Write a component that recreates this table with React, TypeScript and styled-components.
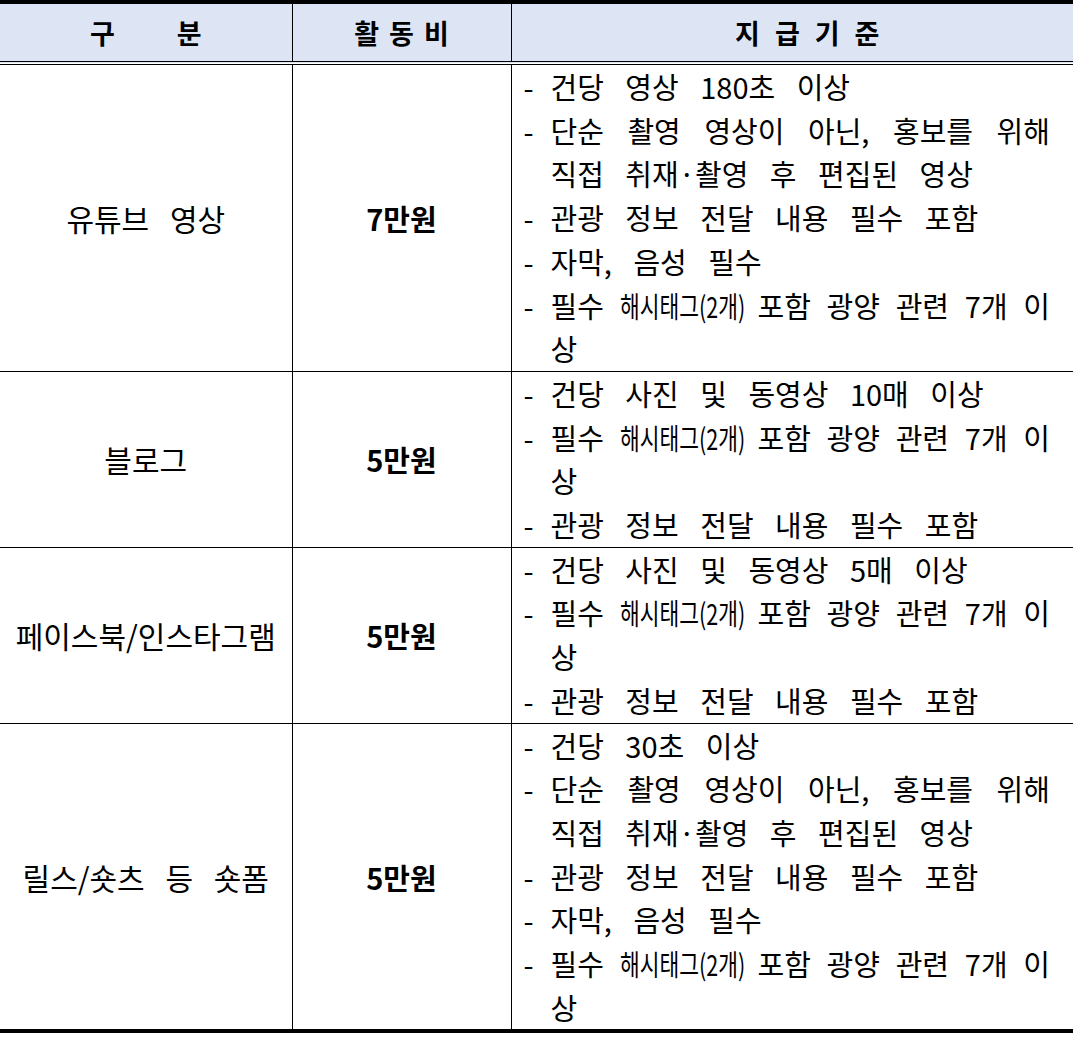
import React from 'react';
import styled, { createGlobalStyle } from 'styled-components';

type Rule = React.ReactNode[];

interface Row {
  kind: string;
  fee: string;
  rules: Rule[];
}

const GlobalStyle = createGlobalStyle`
  html, body {
    margin: 0;
    padding: 0;
    background: #fff;
  }
  body {
    font-family: "Noto Sans CJK KR", "Noto Sans", sans-serif;
    color: #000;
  }
`;

// the table runs a little past the right edge of the page, as in the scan
const Frame = styled.div`
  width: 1073px;
  overflow: hidden;
`;

const Table = styled.table`
  width: 1103px;
  border-collapse: collapse;
  table-layout: fixed;
  border-top: 4px solid #000;
  border-bottom: 4px solid #000;
`;

const Col = styled.col<{ $w: number }>`
  width: ${({ $w }) => $w}px;
`;

const HeadCell = styled.th`
  height: 57px;
  padding: 0;
  background: #dde5f5;
  border-left: 1px solid #000;
  border-bottom: 4px double #000;
  font-size: 27px;
  font-weight: 700;
  text-align: center;
  vertical-align: middle;
  &:first-child {
    border-left: none;
  }
`;

const HeadLabel = styled.span<{ $gap: number }>`
  letter-spacing: ${({ $gap }) => $gap}px;
  margin-right: -${({ $gap }) => $gap}px;
`;

const NameCell = styled.td<{ $bold?: boolean }>`
  padding: 0;
  border-left: 1px solid #000;
  border-top: 1px solid #000;
  text-align: center;
  vertical-align: middle;
  font-size: ${({ $bold }) => ($bold ? 29 : 30)}px;
  font-weight: ${({ $bold }) => ($bold ? 700 : 400)};
  word-spacing: 14px;
  &:first-child {
    border-left: none;
  }
`;

const RuleCell = styled.td`
  padding: 0 53px 0 12px;
  border-left: 1px solid #000;
  border-top: 1px solid #000;
  vertical-align: top;
  font-size: 29px;
  font-weight: 400;
  line-height: 43.7px;
`;

const Item = styled.div`
  display: flex;
`;

const Dash = styled.span`
  flex: none;
  width: 27px;
`;

const Lines = styled.div`
  flex: 1;
  min-width: 0;
`;

const Line = styled.div<{ $justify?: boolean }>`
  word-spacing: ${({ $justify }) => ($justify ? 0 : 15)}px;
  text-align: ${({ $justify }) => ($justify ? 'justify' : 'left')};
  text-align-last: ${({ $justify }) => ($justify ? 'justify' : 'auto')};
  white-space: ${({ $justify }) => ($justify ? 'normal' : 'nowrap')};
`;

const Narrow = styled.span`
  display: inline-block;
  transform: scaleX(0.74);
  transform-origin: left center;
  margin-right: -47px;
`;

const hashLine = (
  <>
    필수 <Narrow>해시태그(2개)</Narrow> 포함 광양 관련 7개 이
  </>
);

const rows: Row[] = [
  {
    kind: '유튜브 영상',
    fee: '7만원',
    rules: [
      ['건당 영상 180초 이상'],
      ['단순 촬영 영상이 아닌, 홍보를 위해', '직접 취재·촬영 후 편집된 영상'],
      ['관광 정보 전달 내용 필수 포함'],
      ['자막, 음성 필수'],
      [hashLine, '상'],
    ],
  },
  {
    kind: '블로그',
    fee: '5만원',
    rules: [
      ['건당 사진 및 동영상 10매 이상'],
      [hashLine, '상'],
      ['관광 정보 전달 내용 필수 포함'],
    ],
  },
  {
    kind: '페이스북/인스타그램',
    fee: '5만원',
    rules: [
      ['건당 사진 및 동영상 5매 이상'],
      [hashLine, '상'],
      ['관광 정보 전달 내용 필수 포함'],
    ],
  },
  {
    kind: '릴스/숏츠 등 숏폼',
    fee: '5만원',
    rules: [
      ['건당 30초 이상'],
      ['단순 촬영 영상이 아닌, 홍보를 위해', '직접 취재·촬영 후 편집된 영상'],
      ['관광 정보 전달 내용 필수 포함'],
      ['자막, 음성 필수'],
      [hashLine, '상'],
    ],
  },
];

const App = () => {
  return (
    <>
      <GlobalStyle />
      <Frame>
        <Table>
          <colgroup>
            <Col $w={292} />
            <Col $w={219} />
            <Col $w={592} />
          </colgroup>
          <thead>
            <tr>
              <HeadCell>
                <HeadLabel $gap={62}>구분</HeadLabel>
              </HeadCell>
              <HeadCell>
                <HeadLabel $gap={10}>활동비</HeadLabel>
              </HeadCell>
              <HeadCell>
                <HeadLabel $gap={15}>지급기준</HeadLabel>
              </HeadCell>
            </tr>
          </thead>
          <tbody>
            {rows.map(row => (
              <tr key={row.kind}>
                <NameCell>{row.kind}</NameCell>
                <NameCell $bold>{row.fee}</NameCell>
                <RuleCell>
                  {row.rules.map((rule, i) => (
                    <Item key={i}>
                      <Dash>-</Dash>
                      <Lines>
                        {rule.map((line, j) => (
                          <Line key={j} $justify={j < rule.length - 1}>
                            {line}
                          </Line>
                        ))}
                      </Lines>
                    </Item>
                  ))}
                </RuleCell>
              </tr>
            ))}
          </tbody>
        </Table>
      </Frame>
    </>
  );
};

export default App;
